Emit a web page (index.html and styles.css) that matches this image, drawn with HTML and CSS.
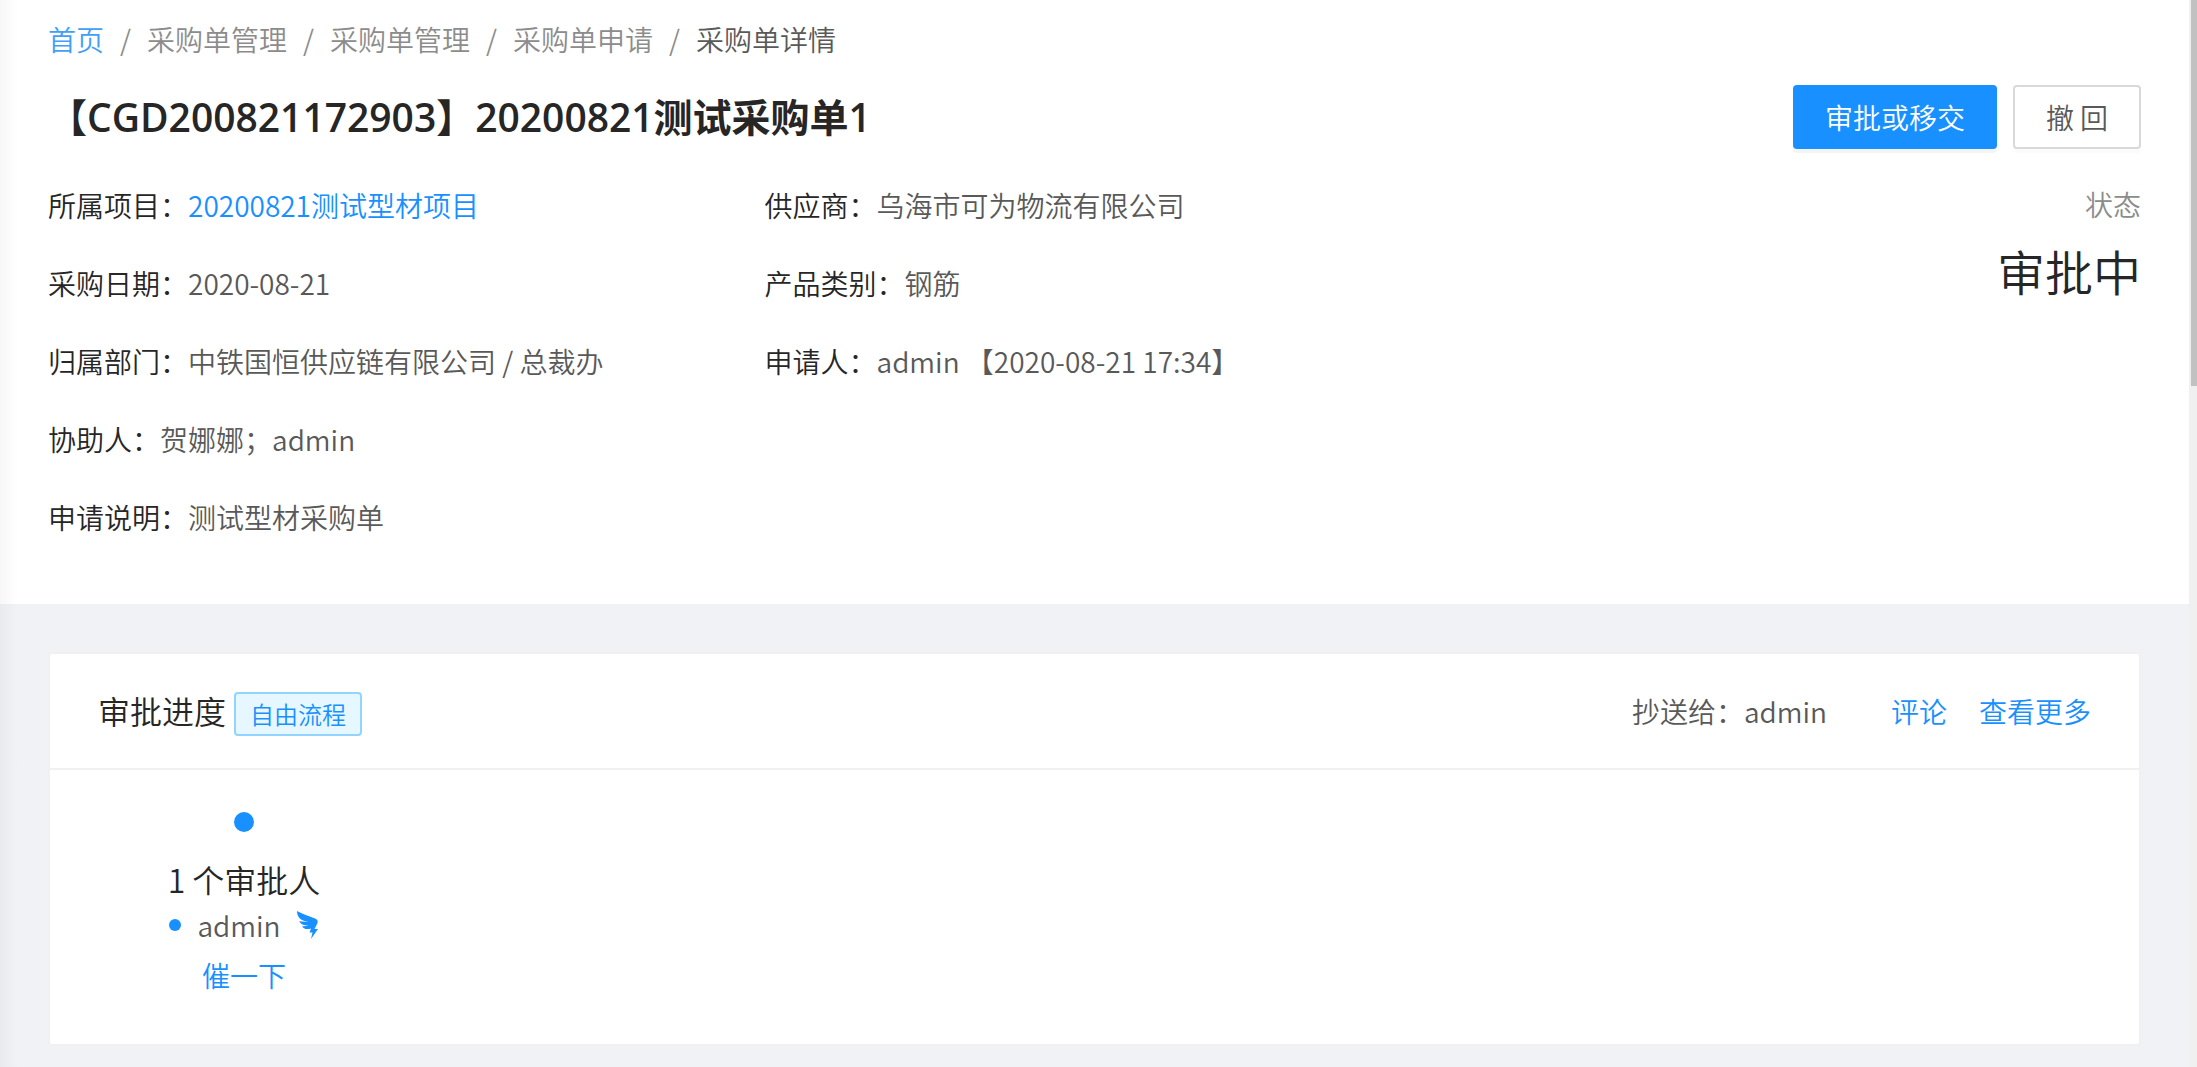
FILE: index.html
```html
<!DOCTYPE html>
<html lang="zh-CN">
<head>
    <meta charset="UTF-8">
    <meta name="viewport" content="width=device-width, initial-scale=1.0">
    <title>采购单详情</title>
    <link rel="stylesheet" href="styles.css">
</head>
<body>
    <div class="layout">
        <main class="page">
            <header class="page-header">
                <nav class="breadcrumb" aria-label="breadcrumb">
                    <a href="#" class="home">首页</a>
                    <span class="separator">/</span>
                    <span>采购单管理</span>
                    <span class="separator">/</span>
                    <span>采购单管理</span>
                    <span class="separator">/</span>
                    <span>采购单申请</span>
                    <span class="separator">/</span>
                    <span class="current">采购单详情</span>
                </nav>

                <div class="title-row">
                    <h1>【CGD200821172903】20200821测试采购单1</h1>
                    <div class="actions">
                        <button type="button" class="btn btn-primary">审批或移交</button>
                        <button type="button" class="btn">撤 回</button>
                    </div>
                </div>

                <div class="detail">
                    <dl class="description">
                        <div class="item"><dt>所属项目：</dt><dd><a href="#">20200821测试型材项目</a></dd></div>
                        <div class="item"><dt>供应商：</dt><dd>乌海市可为物流有限公司</dd></div>
                        <div class="item"><dt>采购日期：</dt><dd>2020-08-21</dd></div>
                        <div class="item"><dt>产品类别：</dt><dd>钢筋</dd></div>
                        <div class="item"><dt>归属部门：</dt><dd>中铁国恒供应链有限公司 / 总裁办</dd></div>
                        <div class="item"><dt>申请人：</dt><dd>admin 【2020-08-21 17:34】</dd></div>
                        <div class="item wide"><dt>协助人：</dt><dd>贺娜娜；admin</dd></div>
                        <div class="item wide"><dt>申请说明：</dt><dd>测试型材采购单</dd></div>
                    </dl>
                    <div class="status">
                        <div class="status-label">状态</div>
                        <div class="status-value">审批中</div>
                    </div>
                </div>
            </header>

            <section class="card">
                <div class="card-head">
                    <div class="card-title">
                        <h2>审批进度</h2>
                        <span class="tag">自由流程</span>
                    </div>
                    <div class="card-extra">
                        <span class="copy-to">抄送给：admin</span>
                        <a href="#">评论</a>
                        <a href="#">查看更多</a>
                    </div>
                </div>
                <div class="card-body">
                    <div class="step">
                        <span class="step-dot"></span>
                        <h3>1 个审批人</h3>
                        <div class="approver">
                            <span class="badge-dot"></span>
                            <span>admin</span>
                            <svg class="ding" viewBox="0 0 22 28" aria-hidden="true">
                                <path d="M0 0C5 3 12 5 18 7.500Q21.500 9 20.500 12L17.500 18H21L14 28L15.500 21.500H12.500L14 17.500C9 19 6.500 17.500 5 15.500L12 14.500C7 14.800 3.500 13 2.200 10.200L12 11C6 10 0 8 0 0Z"/>
                            </svg>
                        </div>
                        <a href="#">催一下</a>
                    </div>
                </div>
            </section>
        </main>
        <div class="scrollbar"><div class="thumb"></div></div>
    </div>
</body>
</html>
```
FILE: styles.css
```css
* {
    box-sizing: border-box;
}
body {
    margin: 0;
    font-family: "Noto Sans CJK SC", sans-serif;
    font-size: 28px;
    font-weight: 350;
    line-height: 42px;
    color: #595959;
    background: #f0f2f5;
}
h1, h2, h3, dl, dd {
    margin: 0;
}
a {
    color: #1890ff;
    text-decoration: none;
}
.layout {
    display: flex;
    min-height: 100vh;
}
.page {
    position: relative;
    flex: 1;
    min-width: 0;
}
/* shadow cast by the side menu */
.page::before {
    content: "";
    position: absolute;
    top: 0;
    bottom: 0;
    left: 0;
    width: 18px;
    background: linear-gradient(to right, rgba(0, 0, 0, 0.03), rgba(0, 0, 0, 0));
}
.page-header {
    padding: 19px 48px 30px;
    background: #fff;
}
.breadcrumb {
    display: flex;
    gap: 16px;
    line-height: 40px;
    color: #8c8c8c;
}
.breadcrumb .home {
    color: #40a0f8;
}
.breadcrumb .current {
    color: #595959;
}
.title-row {
    display: flex;
    justify-content: space-between;
    align-items: center;
    margin-top: 26px;
}
h1 {
    font-family: "Open Sans", "Noto Sans CJK SC", sans-serif;
    font-size: 39px;
    font-weight: 600;
    line-height: 64px;
    color: #262626;
}
.actions {
    display: flex;
    gap: 16px;
}
.btn {
    height: 64px;
    min-width: 128px;
    padding: 0 30px;
    border: 2px solid #d9d9d9;
    border-radius: 4px;
    background: #fff;
    box-shadow: 0 4px 0 rgba(0, 0, 0, 0.016);
    color: #595959;
    font: inherit;
    cursor: pointer;
}
.btn-primary {
    border-color: #1890ff;
    background: #1890ff;
    box-shadow: 0 4px 0 rgba(0, 0, 0, 0.045);
    color: #fff;
}
.detail {
    display: flex;
    margin-top: 35px;
}
.description {
    display: grid;
    grid-template-columns: 1fr 1fr;
    flex: 1;
}
.item {
    display: flex;
    padding-bottom: 36px;
}
.item.wide {
    grid-column: 1 / -1;
}
dt {
    color: #262626;
}
.status {
    width: 484px;
    margin-left: 176px;
    text-align: right;
}
.status-label {
    line-height: 40px;
    color: #8c8c8c;
}
.status-value {
    margin-top: 8px;
    font-size: 48px;
    line-height: 76px;
    color: #262626;
}
.card {
    margin: 48px;
    border: 2px solid #f0f0f0;
    border-radius: 4px;
    background: #fff;
}
.card-head {
    display: flex;
    justify-content: space-between;
    align-items: center;
    height: 116px;
    padding: 0 48px;
    border-bottom: 2px solid #f0f0f0;
}
.card-title {
    display: flex;
    align-items: baseline;
    gap: 8px;
}
h2, h3 {
    font-size: 32px;
    font-weight: inherit;
    line-height: 46px;
    color: #262626;
}
.tag {
    padding: 0 14px;
    border: 2px solid #91d5ff;
    border-radius: 4px;
    background: #e6f7ff;
    color: #1890ff;
    font-size: 24px;
    line-height: 40px;
}
.card-extra {
    display: flex;
    gap: 32px;
}
.copy-to {
    margin-right: 32px;
}
.card-body {
    padding: 42px 48px 48px;
}
.step {
    display: flex;
    flex-direction: column;
    align-items: center;
    width: 292px;
}
.step-dot {
    width: 20px;
    height: 20px;
    border-radius: 50%;
    background: #1890ff;
}
.step h3 {
    margin: 24px 0 2px;
}
.approver {
    display: flex;
    align-items: center;
    gap: 16px;
    margin-bottom: 8px;
}
.badge-dot {
    width: 12px;
    height: 12px;
    border-radius: 50%;
    background: #1890ff;
}
.ding {
    width: 22px;
    height: 28px;
    fill: #1890ff;
}
.scrollbar {
    width: 8px;
    padding-left: 2px;
    background: #f0f0f0;
}
.thumb {
    height: 386px;
    background: #c1c1c1;
}
```
